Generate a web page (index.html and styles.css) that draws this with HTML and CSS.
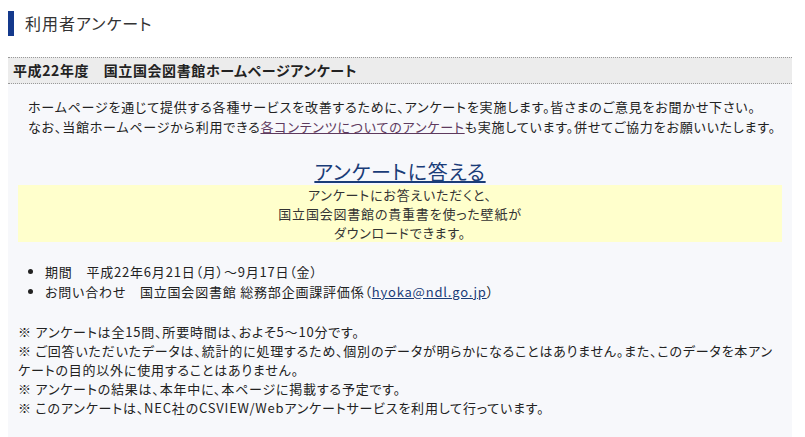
FILE: index.html
```html
<!DOCTYPE html>
<html lang="ja">
<head>
    <meta charset="UTF-8">
    <title>利用者アンケート</title>
    <link rel="stylesheet" href="styles.css">
</head>
<body>
    <h1 class="page-title">利用者アンケート</h1>

    <div class="section">
        <h2 class="section-head">平成22年度　国立国会図書館ホームページアンケート</h2>
        <div class="section-body">
            <p class="lead">
                ホームページを通じて提供する各種サービスを改善するために、アンケートを実施します。皆さまのご意見をお聞かせ下さい。<br>
                なお、当館ホームページから利用できる<a href="#" class="visited">各コンテンツについてのアンケート</a>も実施しています。併せてご協力をお願いいたします。
            </p>

            <p class="answer"><a href="#">アンケートに答える</a></p>
            <div class="notice">
                アンケートにお答えいただくと、<br>
                国立国会図書館の貴重書を使った壁紙が<br>
                ダウンロードできます。
            </div>

            <ul class="info">
                <li>期間　平成22年6月21日（月）～9月17日（金）</li>
                <li>お問い合わせ　国立国会図書館 総務部企画課評価係（<a href="#">hyoka@ndl.go.jp</a>）</li>
            </ul>

            <!-- 注意事項 -->
            <p class="notes">
                ※ アンケートは全15問、所要時間は、およそ5～10分です。<br>
                ※ ご回答いただいたデータは、統計的に処理するため、個別のデータが明らかになることはありません。また、このデータを本アンケートの目的以外に使用することはありません。<br>
                ※ アンケートの結果は、本年中に、本ページに掲載する予定です。<br>
                ※ このアンケートは、NEC社のCSVIEW/Webアンケートサービスを利用して行っています。
            </p>
        </div>
    </div>
</body>
</html>
```

FILE: styles.css
```css
body {
    margin: 0;
    padding: 0;
    background-color: #fff;
    color: #222;
    font-family: "Noto Sans CJK JP", "Liberation Sans", sans-serif;
    font-size: 13px;
    letter-spacing: 0.8px;
    font-feature-settings: "palt";
}

a {
    color: #1a3c78;
    text-decoration: underline;
}

a.visited {
    color: #5e3a5e;
}

.page-title {
    margin: 11px 8px 0;
    padding-left: 11px;
    border-left: 6px solid #14398c;
    height: 25px;
    line-height: 25px;
    font-size: 16px;
    font-weight: normal;
    letter-spacing: 1px;
    color: #333;
}

.section {
    margin: 21px 13px 0 8px;
}

.section-head {
    margin: 0;
    padding: 0 5px;
    height: 25px;
    line-height: 25px;
    background-color: #ececec;
    border-top: 1px dotted #999;
    border-bottom: 1px dotted #999;
    font-size: 14px;
    font-weight: bold;
    letter-spacing: 0.6px;
    color: #222;
}

.section-body {
    background-color: #f7f8fb;
    padding: 13px 10px 30px;
}

.lead {
    margin: 0;
    padding-left: 10px;
    line-height: 20px;
    white-space: nowrap;
}

.answer {
    margin: 22px 0 0;
    text-align: center;
    font-size: 20px;
    line-height: 26px;
}

.notice {
    background-color: #ffffcc;
    text-align: center;
    line-height: 19px;
    color: #333;
}

.info {
    margin: 20px 0 0;
    padding-left: 27px;
    line-height: 20px;
}

.notes {
    margin: 20px 0 0;
    line-height: 19px;
}
```
